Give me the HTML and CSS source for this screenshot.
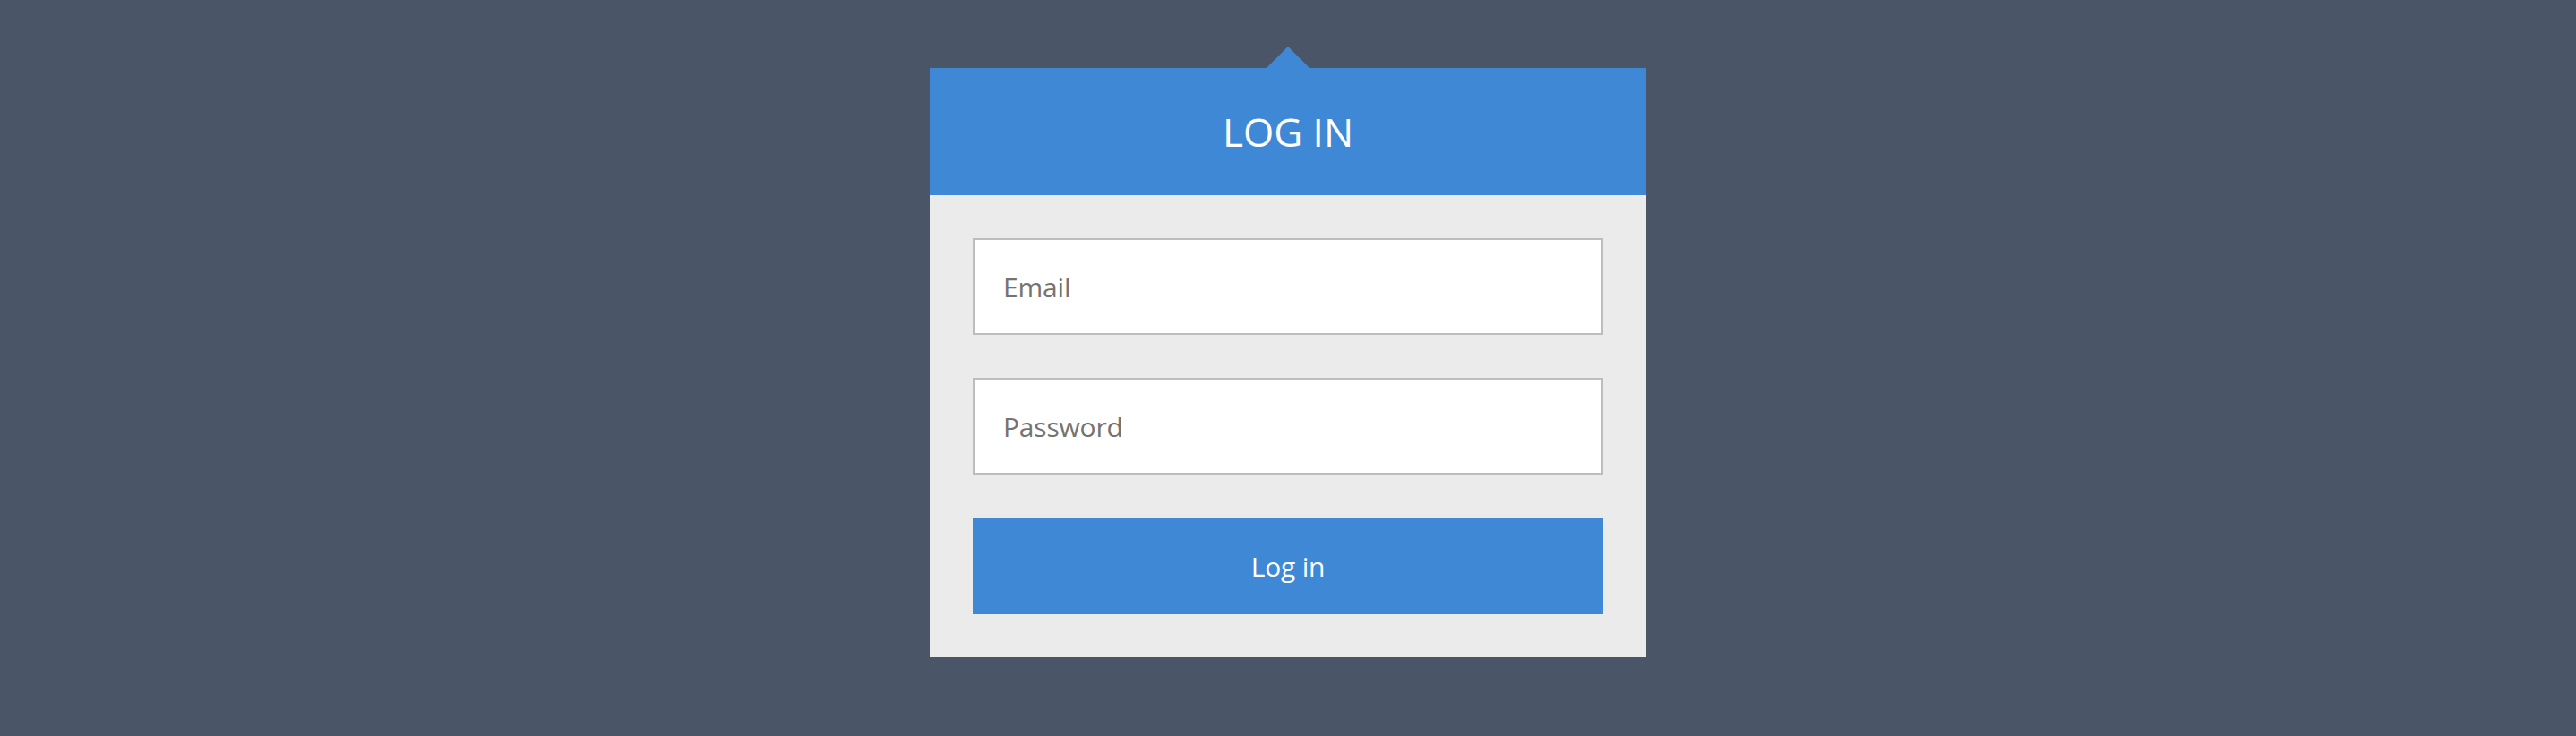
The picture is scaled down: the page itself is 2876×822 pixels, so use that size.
FILE: index.html
```html
<!DOCTYPE html>
<html>
<head>
<meta charset="utf-8">
<title>Log in</title>
<link rel="stylesheet" href="styles.css">
</head>
<body>
<div class="login">
  <div class="login-header">
    <h1 class="login-title">LOG IN</h1>
  </div>
  <form class="login-form">
    <input class="login-input" type="email" placeholder="Email">
    <input class="login-input" type="password" placeholder="Password">
    <button class="login-button" type="button">Log in</button>
  </form>
</div>
</body>
</html>
```

FILE: styles.css
```css
html, body {
  margin: 0;
  padding: 0;
}

body {
  background: #4a5667;
  font-family: "Open Sans", "Noto Sans", sans-serif;
}

.login {
  width: 800px;
  margin: 76px auto 0;
  position: relative;
}

.login::before {
  content: "";
  position: absolute;
  top: -24px;
  left: 50%;
  margin-left: -24px;
  width: 0;
  height: 0;
  border-left: 24px solid transparent;
  border-right: 24px solid transparent;
  border-bottom: 24px solid #3f88d5;
}

.login-header {
  background: #3f88d5;
  height: 142px;
  display: flex;
  align-items: center;
  justify-content: center;
}

.login-title {
  margin: 0;
  color: #ffffff;
  font-size: 44px;
  font-weight: 400;
  line-height: 1;
}

.login-form {
  background: #ebebeb;
  padding: 48px;
  display: flex;
  flex-direction: column;
  gap: 48px;
  margin: 0;
}

.login-input {
  box-sizing: border-box;
  height: 108px;
  width: 100%;
  border: 2px solid #bdbdbd;
  background: #ffffff;
  padding: 0 32px;
  font-family: "Open Sans", "Noto Sans", sans-serif;
  font-size: 30px;
  letter-spacing: -0.2px;
  color: #757575;
  outline: none;
  margin: 0;
}

.login-input::placeholder {
  color: #757370;
  opacity: 1;
}

.login-button {
  box-sizing: border-box;
  height: 108px;
  width: 100%;
  border: 0;
  background: #3f88d5;
  color: #ffffff;
  font-family: "Open Sans", "Noto Sans", sans-serif;
  font-size: 30px;
  letter-spacing: -0.2px;
  cursor: pointer;
  margin: 0;
  padding: 0;
}
```
